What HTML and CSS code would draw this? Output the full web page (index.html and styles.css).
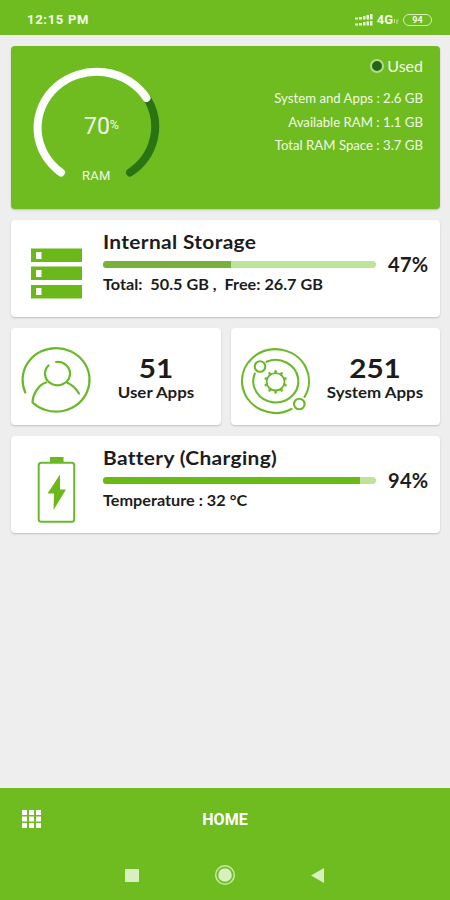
FILE: index.html
```html
<!DOCTYPE html>
<html lang="en">
<head>
<meta charset="utf-8">
<title>Device status</title>
<link rel="stylesheet" href="styles.css">
</head>
<body>
<header class="status">
  <span class="clock">12:15 PM</span>
  <svg class="signal" width="18" height="12" viewBox="0 0 18 12" fill="#e9f7d9"><path d="M0 3.500h3v2H0zM4 3h3v2.500H4zM8 2h2.500v3.500H8zM11.500 1H14v4.500h-2.500zM15 0h2.500v5.500H15zM0 9.500h3v2H0zM4 9h3v2.500H4zM8 8h2.500v3.500H8zM11.500 7.500H14v4h-2.500zM15 7h2.500v4.500H15z"/></svg>
  <span class="network">4G</span>
  <svg class="data" width="6" height="5" viewBox="0 0 6 5" fill="none" stroke="#c5e8a0"><path d="M1.500 0v4M4 5V1M5.500 1H4"/></svg>
  <span class="level">94</span>
</header>
<main class="content">
  <section class="card ram">
    <div class="gauge">
      <svg width="136" height="130" viewBox="28 62 136 130" fill="none" stroke-width="8" stroke-linecap="round">
        <path stroke="#2a7414" d="M148.500 99A59 56 0 0 1 131 172.500"/>
        <path stroke="#fff" d="M62 172.500A59 56 0 1 1 147.500 98"/>
      </svg>
      <div class="gauge-value">70<span class="unit">%</span></div>
      <div class="gauge-label">RAM</div>
    </div>
    <div class="facts">
      <div class="legend"><span class="dot"></span><span>Used</span></div>
      <div>System and Apps : 2.6 GB</div>
      <div>Available RAM : 1.1 GB</div>
      <div>Total RAM Space : 3.7 GB</div>
    </div>
  </section>

  <section class="card meter">
    <svg class="icon" width="92" height="97" viewBox="11 220 92 97"><path fill="#6ab819" d="M31 248.500h51V262H31zM31 266.500h51V280H31zM31 285h51v13.500H31z"/><path fill="#fff" d="M36 252h5.500v7H36zM36 270h5.500v7H36zM36 288h5.500v7H36z"/></svg>
    <div class="detail">
      <div class="title">Internal Storage</div>
      <div class="bar"><div class="fill muted" style="width:47%"></div></div>
      <div class="note">Total:&nbsp; 50.5 GB ,&nbsp; Free: 26.7 GB</div>
    </div>
    <div class="percent">47%</div>
  </section>

  <div class="pair">
    <section class="card apps">
      <svg class="icon" width="91" height="97" viewBox="11 328 91 97" fill="none" stroke="#6ab92a" stroke-width="2.200" stroke-linecap="round" stroke-linejoin="round">
        <path d="M25.300 392.500A33.500 31.800 0 1 1 32.500 402.500C32.500 395 38 385 46 382.500"/>
        <path d="M48.500 365.500A12.500 11.700 0 1 0 56 362M67 382.500Q74 385.500 79 393.500"/>
      </svg>
      <div class="count"><div class="number">51</div><div class="name">User Apps</div></div>
    </section>
    <section class="card apps">
      <svg class="icon" width="90" height="97" viewBox="231 328 90 97" fill="none" stroke="#6ab92a" stroke-width="2.100" stroke-linecap="round">
        <path d="M291.500 409A33.500 31.800 0 1 1 304.500 397"/>
        <path d="M254.800 373.500A22.500 21.300 0 1 0 266.500 361.800"/>
        <circle cx="260" cy="366.500" r="5.300"/><circle cx="299.300" cy="404" r="5.300"/>
        <ellipse cx="275.600" cy="381.800" rx="9" ry="8.700" stroke-width="1.900"/>
        <path stroke-width="2.500" d="M275.600 371.200v1.300M281.700 373.200l-.8 1M285.500 378.500l-1.300.4M285.500 385.100l-1.300-.4M281.700 390.400l-.8-1M275.600 392.400v-1.300M269.500 390.400l.8-1M265.700 385.100l1.300-.4M265.700 378.500l1.300.4M269.500 373.200l.8 1"/>
      </svg>
      <div class="count"><div class="number">251</div><div class="name">System Apps</div></div>
    </section>
  </div>

  <section class="card meter">
    <svg class="icon" width="92" height="97" viewBox="11 436 92 97"><path fill="#6ab819" d="M50 457h13.500v6H50zM60 474.500l-12.500 19h6.500L53.500 510 66 489.500h-6z"/><rect x="38.700" y="462.700" width="35.500" height="59" rx="2.500" fill="none" stroke="#6ab92a" stroke-width="2"/></svg>
    <div class="detail">
      <div class="title">Battery (Charging)</div>
      <div class="bar"><div class="fill" style="width:94%"></div></div>
      <div class="note">Temperature : 32 °C</div>
    </div>
    <div class="percent">94%</div>
  </section>
</main>
<footer class="footer">
  <div class="tabs">
    <svg width="20" height="19" viewBox="0 0 20 19" fill="#fff"><path d="M0 0h5v5H0zM7 0h5v5H7zM14 0h5v5h-5zM0 6.500h5v5H0zM7 6.500h5v5H7zM14 6.500h5v5h-5zM0 13h5v5H0zM7 13h5v5H7zM14 13h5v5h-5z"/></svg>
    <span class="home">HOME</span>
    <span></span>
  </div>
  <nav class="system-nav">
    <svg width="14" height="13" viewBox="0 0 14 13"><rect width="14" height="13" fill="#d8efc0"/></svg>
    <svg width="22" height="22" viewBox="0 0 22 22"><circle cx="11" cy="11" r="9.300" fill="none" stroke="#c9e9a9" stroke-width="1.500"/><circle cx="11" cy="11" r="6.800" fill="#d8efc0"/></svg>
    <svg width="14" height="15" viewBox="0 0 14 15"><path fill="#d8efc0" d="M0 7.500L13 0v15z"/></svg>
  </nav>
</footer>
</body>
</html>
```
FILE: styles.css
```css
* { box-sizing: border-box; }
body {
  margin: 0;
  width: 450px;
  height: 900px;
  display: flex;
  flex-direction: column;
  background: #eee;
  color: #1c1c1c;
  font-family: Lato, sans-serif;
  overflow: hidden;
}
.status {
  height: 35px;
  flex: none;
  display: flex;
  align-items: center;
  padding: 4px 18px 0 27px;
  background: #6ebc20;
  color: #f3fbe9;
  font: bold 13px/16px Roboto, sans-serif;
}
.clock { margin-right: auto; letter-spacing: .7px; }
.network { margin-left: 4px; letter-spacing: 0; }
.data { margin: 4px 4px 0 0; }
.level {
  width: 29px;
  height: 12px;
  border: 1.500px solid #d3edb5;
  border-radius: 6px;
  text-align: center;
  font-size: 9px;
  line-height: 10px;
}
.content {
  flex: 1;
  display: flex;
  flex-direction: column;
  gap: 11px;
  padding: 10px 10px 0 11px;
  border-top: 1px solid #fafaf8;
}
.card {
  background: #fff;
  border-radius: 4px;
  box-shadow: 0 1px 2px rgba(0, 0, 0, .2);
}
.ram {
  height: 163px;
  display: flex;
  justify-content: space-between;
  background: #6ebc20;
  color: #f1fae6;
}
.gauge {
  display: grid;
  margin: 16px 0 0 16px;
  width: 136px;
  height: 130px;
  font-family: Roboto, sans-serif;
}
.gauge > * { grid-area: 1 / 1; }
.gauge-value { margin: 52px 0 0 57px; font-size: 23px; line-height: 26px; }
.unit { font-size: 12.500px; vertical-align: 5px; line-height: 1; }
.gauge-label { margin: 106px 0 0 55px; font-size: 13px; line-height: 16px; letter-spacing: .3px; }
.facts { padding: 10px 17px 0 0; text-align: right; font-size: 13.200px; line-height: 23.500px; }
.legend { display: flex; justify-content: flex-end; align-items: center; gap: 3px; height: 20px; margin-bottom: 11px; font-size: 16px; }
.dot { width: 14px; height: 14px; border: 2px solid #b5dc8b; border-radius: 50%; background: #23651b; }
.meter { height: 97px; display: flex; }
.icon { flex: none; }
.detail { width: 273px; padding-top: 10px; flex: none; }
.title, .note { font-weight: bold; white-space: nowrap; transform-origin: left center; }
.title { height: 24px; font-size: 19px; line-height: 24px; letter-spacing: .3px; transform: scaleX(1.100); }
.bar { height: 7px; margin-top: 7px; border-radius: 4px; overflow: hidden; background: #bee39a; }
.fill { height: 100%; background: #69b917; }
.muted { background: #77b13a; }
.note { margin-top: 6px; font-size: 15px; line-height: 20px; transform: scaleX(1.083); }
.percent { margin: 32px 0 0 12px; font-weight: bold; font-size: 20px; line-height: 24px; letter-spacing: .3px; }
.pair { display: grid; grid-template-columns: 210px 209px; gap: 10px; }
.apps { height: 97px; display: flex; }
.count { flex: 1; text-align: center; font-weight: bold; padding: 24px 11px 0 0; }
.number { font-size: 27px; line-height: 31px; transform: scaleX(1.100); }
.name { font-size: 15.500px; line-height: 19px; white-space: nowrap; transform: scaleX(1.090); }
.footer { height: 112px; flex: none; background: #6ebc20; color: #fff; }
.tabs { height: 62px; display: grid; grid-template-columns: 1fr 1fr 1fr; align-items: center; padding: 0 22px; }
.home { padding-top: 1px; text-align: center; font: bold 16px/20px Roboto, sans-serif; }
.system-nav { height: 50px; display: flex; justify-content: center; align-items: center; gap: 75px; }
```
